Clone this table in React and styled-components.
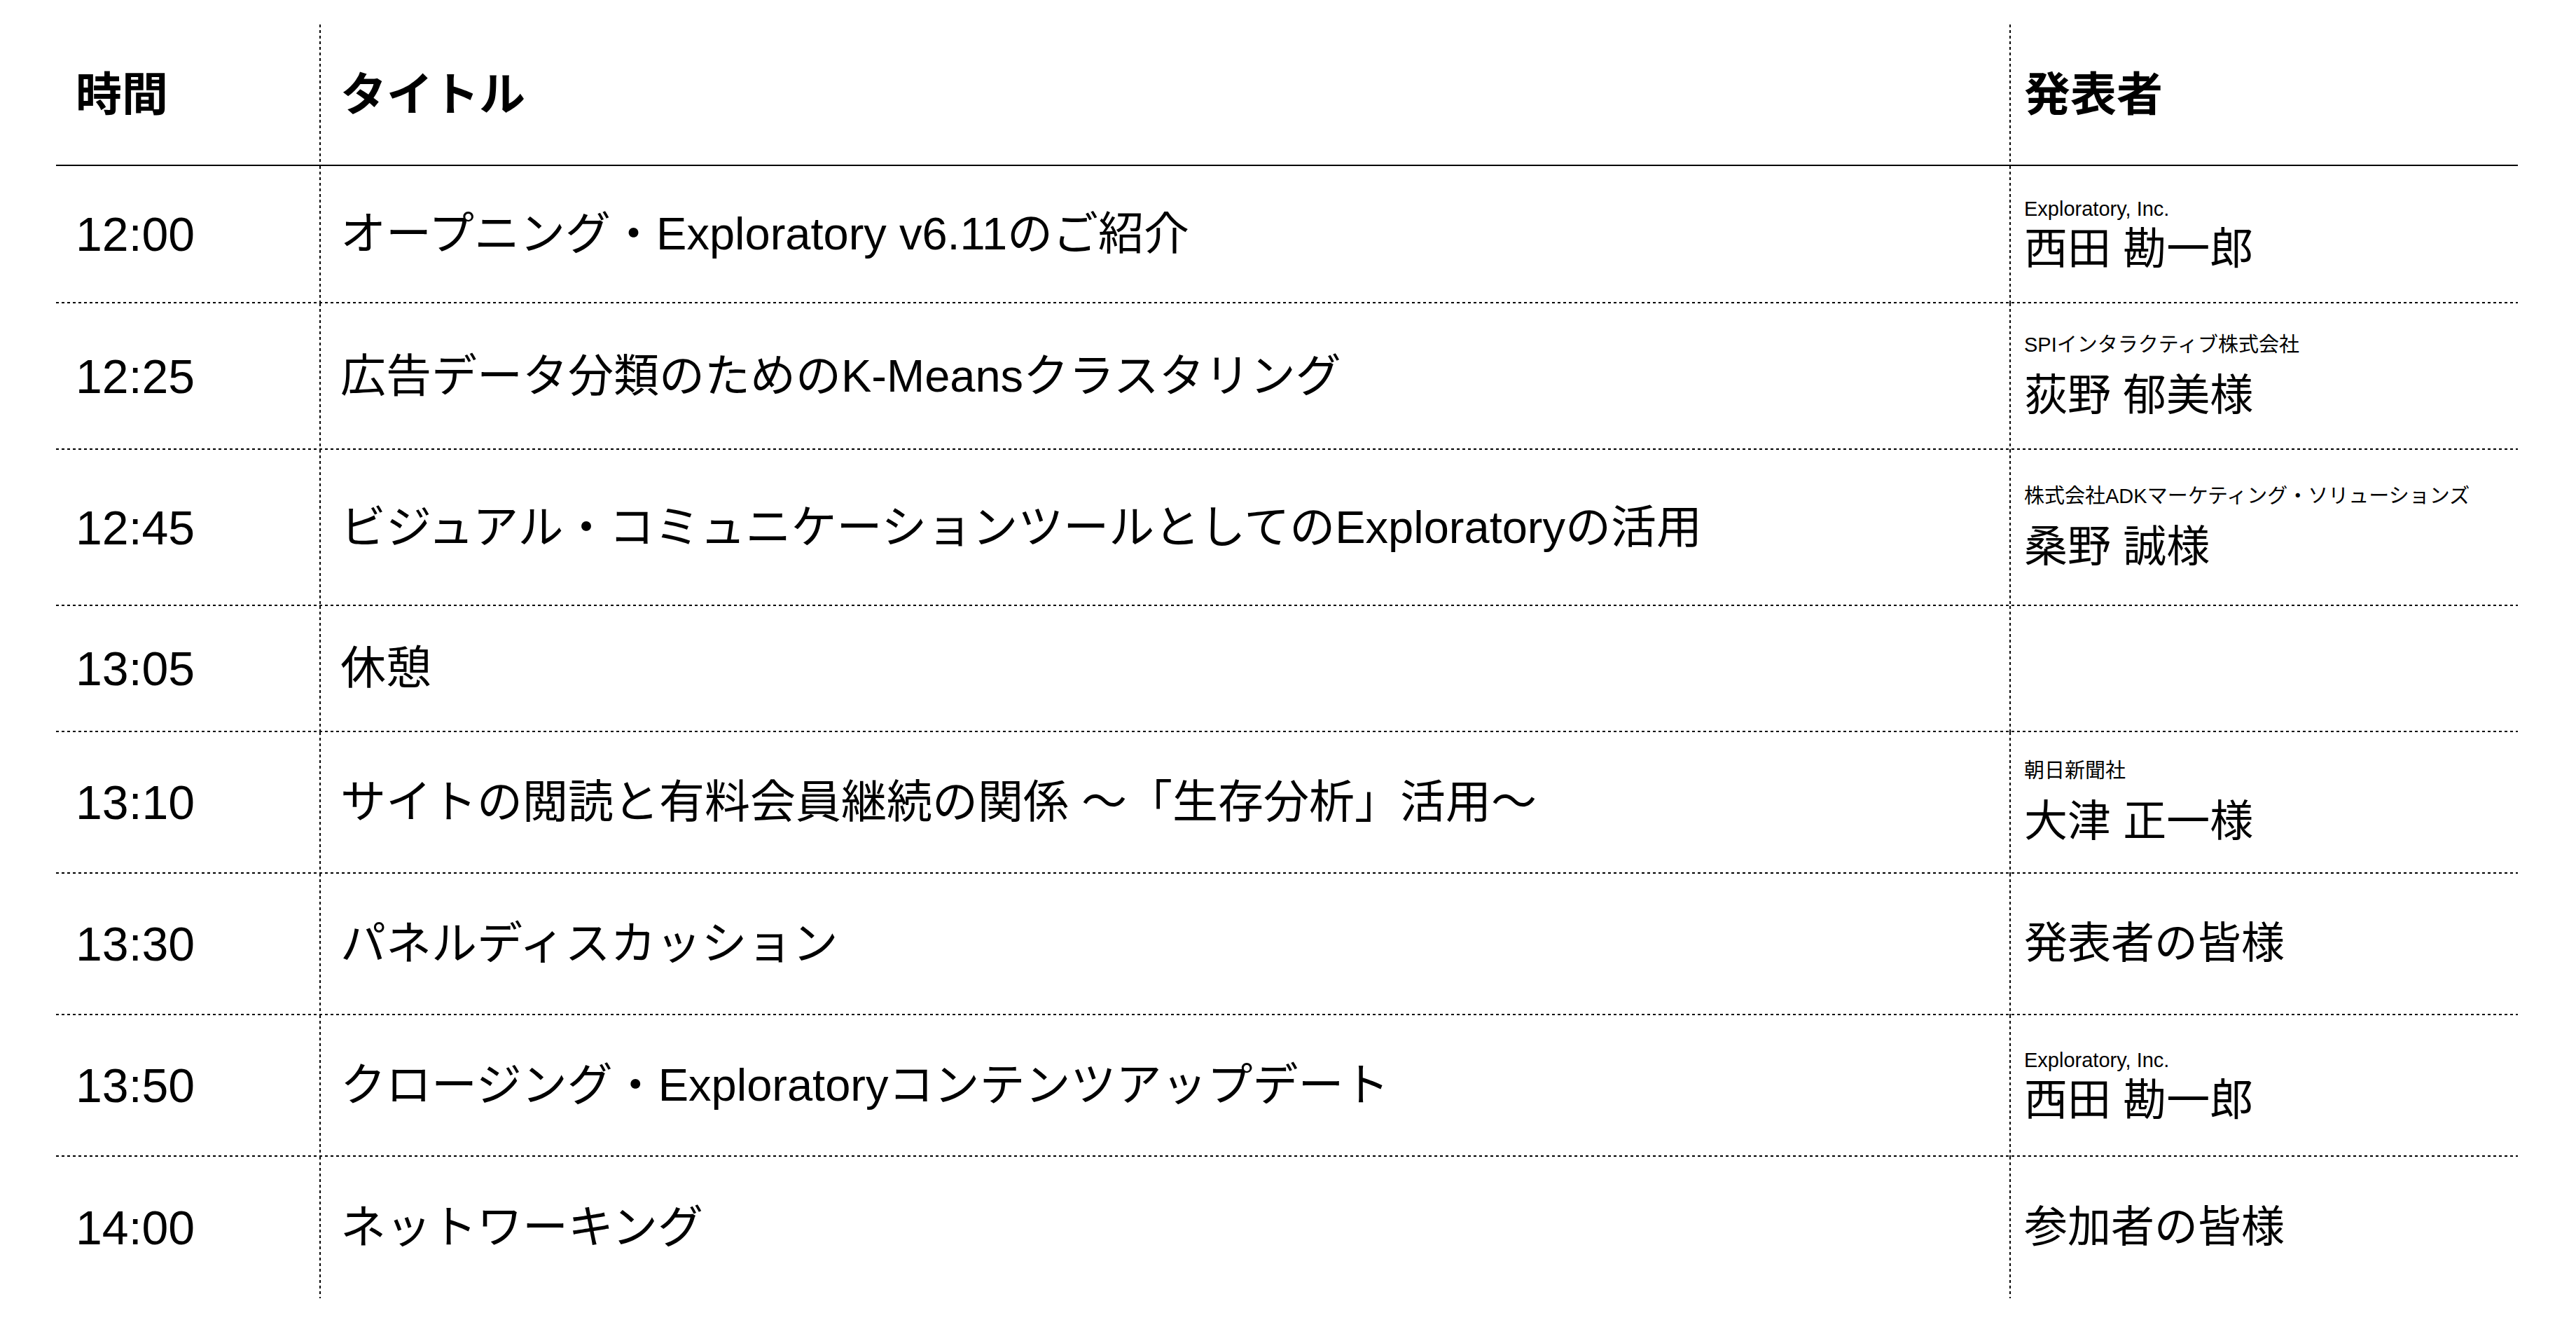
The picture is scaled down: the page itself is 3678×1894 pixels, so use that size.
import React from 'react';
import styled, { createGlobalStyle } from 'styled-components';

const GlobalStyle = createGlobalStyle`
  html, body {
    margin: 0;
    padding: 0;
    background: #ffffff;
  }
  body {
    font-family: "Liberation Sans", "Noto Sans CJK JP", sans-serif;
    color: #000000;
  }
`;

const dashDown = 'repeating-linear-gradient(to bottom, #000 0 4px, transparent 4px 8px)';
const dashAcross = 'repeating-linear-gradient(to right, #000 0 4px, transparent 4px 8px)';

const ruleFor = rule => {
  if (rule === 'solid') return 'linear-gradient(#000, #000)';
  if (rule === 'dotted') return dashAcross;
  return 'none';
};

const Page = styled.div`
  padding: 35px 83px 41px 80px;
`;

const Row = styled.div`
  display: grid;
  grid-template-columns: 376px 2413px 1fr;
  height: ${p => p.$h}px;
  background: ${p => ruleFor(p.$rule)} left bottom / 100% 2px no-repeat;
`;

const Cell = styled.div`
  display: flex;
  flex-direction: column;
  justify-content: center;
  box-sizing: border-box;
  min-width: 0;
  padding-bottom: ${p => (p.$rule === 'none' ? 0 : 2)}px;
`;

const TimeCell = styled(Cell)`
  padding-left: 28px;
`;

const TitleCell = styled(Cell)`
  padding-left: 30px;
  background: ${dashDown} left top / 2px 100% no-repeat;
`;

const SpeakerCell = styled(Cell)`
  padding-left: 21px;
  background: ${dashDown} left top / 2px 100% no-repeat;
`;

const HeadText = styled.div`
  font-size: 66px;
  font-weight: 700;
  line-height: 76px;
  white-space: nowrap;
`;

const Time = styled.div`
  font-size: 68px;
  line-height: 78px;
`;

const Title = styled.div`
  font-size: 65px;
  line-height: 76px;
  white-space: nowrap;
`;

const Org = styled.div`
  font-size: 29px;
  line-height: ${p => (p.$tall ? 56 : 44)}px;
  white-space: nowrap;
`;

const Speaker = styled.div`
  font-size: 62px;
  line-height: ${p => (p.$tall ? 90 : 72)}px;
  white-space: nowrap;
`;

const sessions = [
  { time: '12:00', title: 'オープニング・Exploratory v6.11のご紹介', org: 'Exploratory, Inc.', name: '西田 勘一郎', h: 196 },
  { time: '12:25', title: '広告データ分類のためのK-Meansクラスタリング', org: 'SPIインタラクティブ株式会社', name: '荻野 郁美様', h: 209, tall: true },
  { time: '12:45', title: 'ビジュアル・コミュニケーションツールとしてのExploratoryの活用', org: '株式会社ADKマーケティング・ソリューションズ', name: '桑野 誠様', h: 223, tall: true },
  { time: '13:05', title: '休憩', h: 180 },
  { time: '13:10', title: 'サイトの閲読と有料会員継続の関係 〜「生存分析」活用〜', org: '朝日新聞社', name: '大津 正一様', h: 202, tall: true },
  { time: '13:30', title: 'パネルディスカッション', name: '発表者の皆様', h: 202 },
  { time: '13:50', title: 'クロージング・Exploratoryコンテンツアップデート', org: 'Exploratory, Inc.', name: '西田 勘一郎', h: 202 },
  { time: '14:00', title: 'ネットワーキング', name: '参加者の皆様', h: 202 },
];

const App = () => {
  return (
    <>
      <GlobalStyle />
      <Page>
        <Row $h={202} $rule="solid">
          <TimeCell $rule="solid"><HeadText>時間</HeadText></TimeCell>
          <TitleCell $rule="solid"><HeadText>タイトル</HeadText></TitleCell>
          <SpeakerCell $rule="solid"><HeadText>発表者</HeadText></SpeakerCell>
        </Row>
        {sessions.map((s, i) => {
          const rule = i === sessions.length - 1 ? 'none' : 'dotted';
          return (
            <Row key={s.time} $h={s.h} $rule={rule}>
              <TimeCell $rule={rule}><Time>{s.time}</Time></TimeCell>
              <TitleCell $rule={rule}><Title>{s.title}</Title></TitleCell>
              <SpeakerCell $rule={rule}>
                {s.org && <Org $tall={s.tall}>{s.org}</Org>}
                {s.name && <Speaker $tall={s.tall}>{s.name}</Speaker>}
              </SpeakerCell>
            </Row>
          );
        })}
      </Page>
    </>
  );
};

export default App;
